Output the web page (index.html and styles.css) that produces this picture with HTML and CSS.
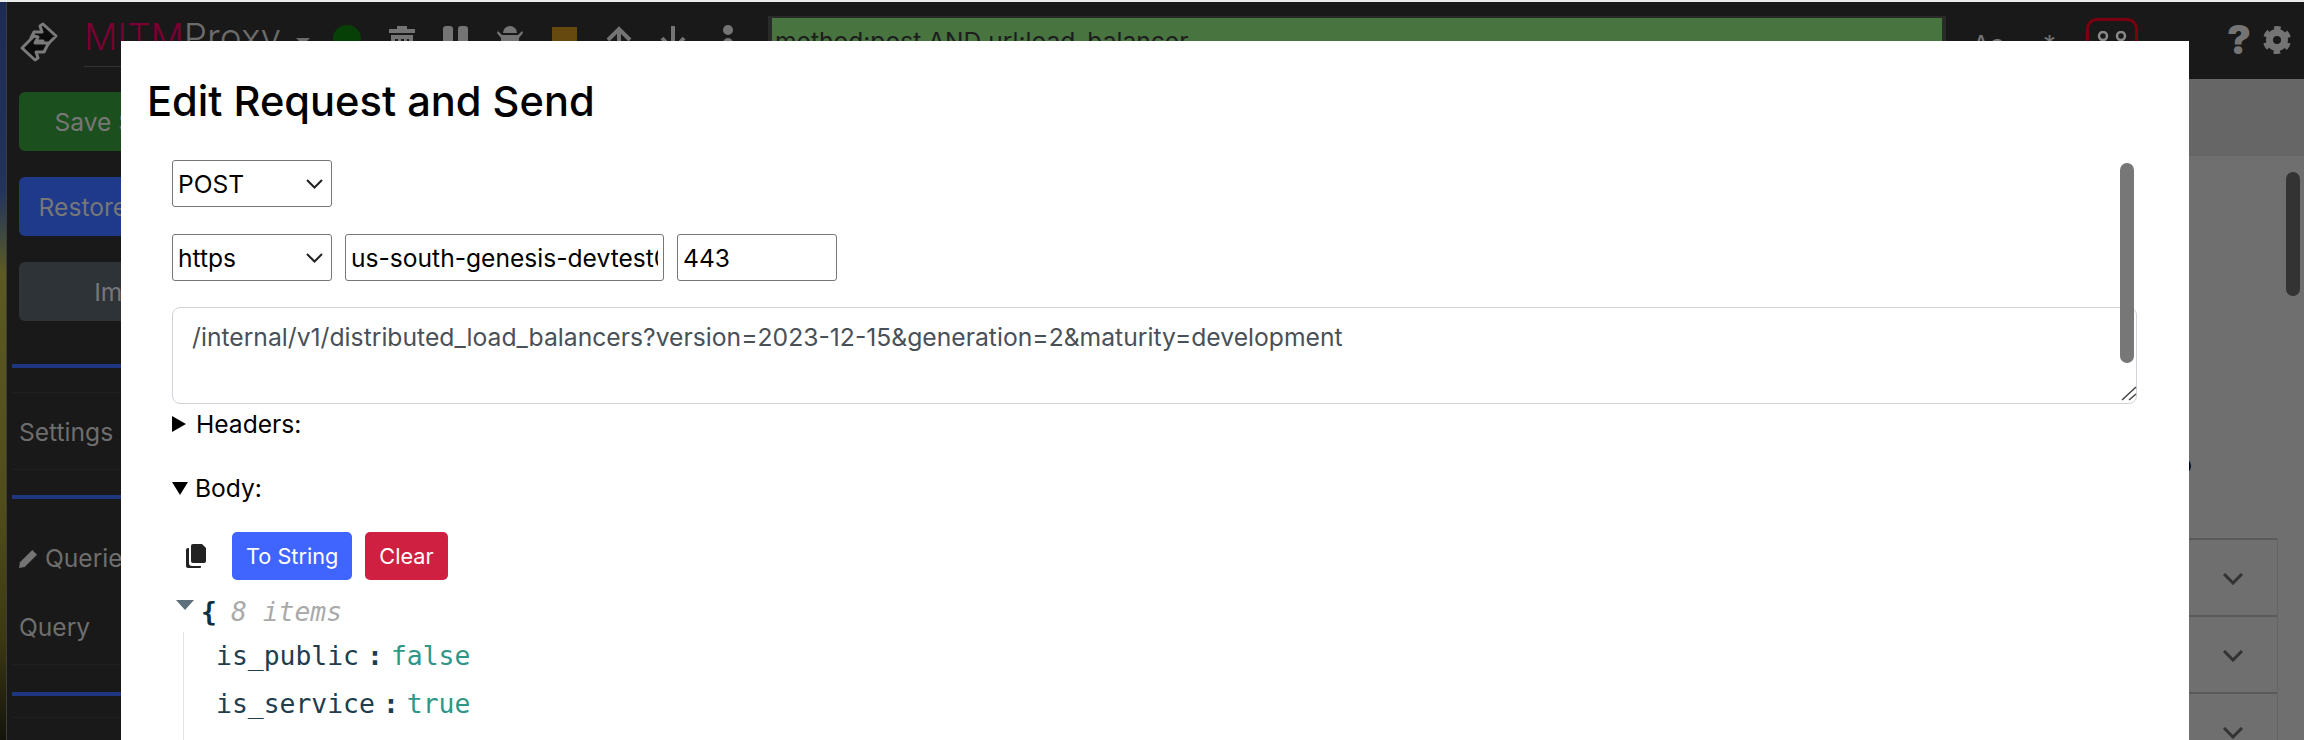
FILE: index.html
```html
<!DOCTYPE html>
<html lang="en">
<head>
<meta charset="utf-8">
<title>Edit Request and Send</title>
<link rel="stylesheet" href="styles.css">
</head>
<body>
<div class="edge"></div>
<div class="shell">
  <div class="wallpaper"></div>
  <div class="app">
    <header class="topbar">
      <svg class="logo" viewBox="0 0 54 48" fill="#0c0c0c" stroke="#7a7a7a" stroke-width="3" stroke-linejoin="round"><path d="M19 20l3-6h8l-2-6 3-2 13 12-12 12-4-1 3-6H20z"/><path d="M35 28l-3 6h-8l2 6-3 2-13-12 12-12 4 1-3 6h14z"/></svg>
      <div class="brand"><span class="brand-mitm">MITM</span><span class="brand-proxy">Proxy</span><span class="brand-caret"></span></div>
      <span class="status-dot"></span>
      <svg class="tool tool-trash" viewBox="0 0 26 40" fill="#747474"><path d="M8 3V0h10v3h8v4H0V3zM2 9h22v31H2zm4 4v20h3V13zm6 0v20h3V13zm6 0v20h2V13z"/></svg>
      <svg class="tool tool-pause" viewBox="0 0 26 40" fill="#747474"><rect width="10" height="40" rx="3"/><rect x="15" width="10" height="40" rx="3"/></svg>
      <svg class="tool tool-bug" viewBox="0 0 26 40" fill="#747474"><path d="M13 0a7 7 0 0 1 7 7H6a7 7 0 0 1 7-7zM5 9h16l4-4 1 2-4 5v3l4 0v3h-4v12H4V18H0v-3h4v-3L0 7l1-2z"/></svg>
      <span class="tool-square"></span>
      <svg class="tool tool-up" viewBox="0 0 26 40" fill="none" stroke="#747474" stroke-width="4"><path d="M2 14 13 3l11 11M13 3v37"/></svg>
      <svg class="tool tool-down" viewBox="0 0 26 40" fill="none" stroke="#747474" stroke-width="4"><path d="M13 0v36M2 12l11 12 11-12"/></svg>
      <svg class="tool tool-dots" viewBox="0 0 26 40" fill="#747474"><circle cx="13" cy="5" r="5"/><circle cx="13" cy="18" r="5"/><circle cx="13" cy="31" r="5"/></svg>
      <div class="filter"><div class="filter-box">method:post AND url:load_balancer</div></div>
      <span class="option option-case">Aa</span>
      <span class="option option-star">*</span>
      <span class="option-tag">
        <svg class="tag-icon" viewBox="0 0 34 22" fill="none" stroke="#8a8a8a" stroke-width="2.5"><circle cx="8" cy="5" r="4"/><circle cx="26" cy="5" r="4"/><path d="M2 19c1-8 11-8 12 0M20 19c1-8 11-8 12 0"/></svg>
      </span>
      <div class="top-right">
        <span class="help">?</span>
        <svg class="gear" viewBox="0 0 28 28" fill="none" stroke="#747474"><circle cx="14" cy="14" r="7.500" stroke-width="7"/><circle class="gear-teeth" cx="14" cy="14" r="12" stroke-width="4"/></svg>
      </div>
    </header>
    <div class="main">
      <aside class="sidebar">
        <button class="side-btn side-green">Save Session</button>
        <button class="side-btn side-blue">Restore Session</button>
        <button class="side-btn side-grey">Import</button>
        <hr class="side-rule side-rule-1">
        <div class="side-row side-row-settings">Settings</div>
        <hr class="side-rule side-rule-2">
        <div class="side-row side-row-queries"><svg class="pencil" viewBox="0 0 20 20" fill="#747474"><path d="M14 1l5 5L6 19l-6 1 1-6z"/></svg>Queries</div>
        <div class="side-row side-row-query">Query</div>
        <hr class="side-rule side-rule-3">
        <div class="side-row-empty"></div>
      </aside>
      <section class="content">
        <div class="content-band"></div>
        <p class="note">Info</p>
        <div class="accordion">
          <div class="acc-item"><svg class="chev" viewBox="0 0 20 12" fill="none" stroke="#333" stroke-width="3"><path d="M1 1l9 9 9-9"/></svg></div>
          <div class="acc-item"><svg class="chev" viewBox="0 0 20 12" fill="none" stroke="#333" stroke-width="3"><path d="M1 1l9 9 9-9"/></svg></div>
          <div class="acc-item"><svg class="chev" viewBox="0 0 20 12" fill="none" stroke="#333" stroke-width="3"><path d="M1 1l9 9 9-9"/></svg></div>
        </div>
      </section>
    </div>
  </div>
</div>
<div class="outer-thumb"></div>

<div class="modal">
  <h2 class="modal-title">Edit Request and Send</h2>
  <form class="modal-body">
    <div class="field-row">
      <select class="select"><option>POST</option></select>
    </div>
    <div class="field-row">
      <select class="select"><option>https</option></select>
      <input class="input input-host" value="us-south-genesis-devtest01.example.com">
      <input class="input input-port" value="443">
    </div>
    <textarea class="path">/internal/v1/distributed_load_balancers?version=2023-12-15&amp;generation=2&amp;maturity=development</textarea>
    <details class="section section-headers"><summary>Headers:</summary></details>
    <details class="section section-body" open>
      <summary>Body:</summary>
      <div class="body-tools">
        <svg class="copy" viewBox="0 0 20 24"><path fill="#222" d="M11 0h5l4 4v13a2 2 0 0 1-2 2H7a2 2 0 0 1-2-2V2a2 2 0 0 1 2-2z"/><path fill="#222" d="M3 4v15a3 3 0 0 0 3 3h9v1a1 1 0 0 1-1 1H2a2 2 0 0 1-2-2V6a2 2 0 0 1 2-2z"/><path fill="#fff" d="M4 5h1v14h-1z"/></svg>
        <button type="button" class="btn btn-blue">To String</button>
        <button type="button" class="btn btn-red">Clear</button>
      </div>
      <div class="json">
        <div class="json-head"><span class="json-caret"></span><span class="json-brace">{</span><span class="json-count">8 items</span></div>
        <div class="json-list">
          <div class="json-row"><span class="json-key">is_public</span><span class="json-colon">:</span><span class="json-val">false</span></div>
          <div class="json-row"><span class="json-key">is_service</span><span class="json-colon">:</span><span class="json-val">true</span></div>
        </div>
      </div>
    </details>
  </form>
  <svg class="resize-grip" viewBox="0 0 16 15" fill="none" stroke="#444" stroke-width="1.500"><path d="M1 14 15 1M8 14l7-6"/></svg>
  <div class="modal-thumb"></div>
</div>
</body>
</html>
```
FILE: styles.css
```css
* { box-sizing: border-box; }
html, body { margin: 0; height: 740px; overflow: hidden; background: #191919; font-family: Inter, "Liberation Sans", sans-serif; }
.edge { height: 2px; background: #ebebeb; }
.shell { display: flex; height: 738px; }
.wallpaper { width: 7px; border-right: 1px solid #3d3d3d; background: linear-gradient(#1c2b52 0, #22345c 190px, #3a4545 225px, #5c5a22 270px, #4f4c1a 520px, #3a3812 640px, #14140c 738px); }
.app { flex: 1; display: flex; flex-direction: column; min-width: 0; }

.topbar { height: 77px; flex: none; background: #191919; display: flex; align-items: flex-start; position: relative; overflow: hidden; }
.logo { width: 54px; height: 48px; margin: 16px 0 0 5px; flex: none; }
.brand { margin: 11px 0 0 18px; height: 54px; width: 232px; border-bottom: 1px solid #333; font-size: 37px; line-height: 48px; font-weight: 300; display: flex; flex: none; }
.brand-mitm { color: #7a0033; }
.brand-proxy { color: #6b6b6b; }
.brand-caret { width: 0; height: 0; border: 7px solid transparent; border-top-color: #6b6b6b; margin: 25px 0 0 15px; }
.status-dot { position: absolute; left: 326px; top: 23px; width: 28px; height: 28px; border-radius: 50%; background: #064006; }
.tool { position: absolute; top: 24px; width: 26px; height: 40px; }
.tool-trash { left: 382px; }
.tool-pause { left: 436px; }
.tool-bug { left: 490px; }
.tool-up { left: 599px; }
.tool-down { left: 653px; }
.tool-dots { left: 708px; top: 23px; }
.tool-square { position: absolute; left: 545px; top: 25px; width: 25px; height: 25px; background: #66490f; }
.filter { position: absolute; left: 761px; top: 14px; width: 1178px; height: 40px; background: #2a2a2a; padding: 2px 4px; }
.filter-box { height: 40px; background: #47743f; padding: 8px 3px; font-size: 24.600px; line-height: 30px; color: #1d1d1d; white-space: nowrap; }
.option { position: absolute; color: #747474; font-size: 26px; line-height: 30px; top: 28px; }
.option-case { left: 1965px; }
.option-star { left: 2036px; }
.option-tag { position: absolute; left: 2079px; top: 16px; width: 52px; height: 40px; border: 3px solid #7a0010; border-radius: 11px; display: flex; justify-content: center; }
.tag-icon { width: 34px; height: 22px; margin-top: 10px; }
.top-right { position: absolute; left: 2219px; top: 23px; display: flex; align-items: center; gap: 11px; }
.help { color: #747474; font-size: 40px; line-height: 30px; font-weight: 900; width: 26px; text-align: center; }
.gear { width: 28px; height: 28px; }
.gear-teeth { stroke-dasharray: 6.500 6.070; stroke-dashoffset: -3.030; }

.main { flex: 1; display: flex; min-height: 0; }
.sidebar { width: 250px; flex: none; background: #191919; padding: 13px 0 0 12px; }
.side-btn { display: block; width: 226px; height: 59px; border: 0; border-radius: 6px; margin-bottom: 26px; font: 24.600px Inter, sans-serif; color: #777; text-align: center; white-space: nowrap; padding: 0; }
.side-green { background: #1c4f1e; }
.side-blue { background: #1f3a8a; }
.side-grey { background: #2e3338; }
.side-rule { border: 0; height: 4px; margin: 0 0 0 -7px; background: #1f3680; }
.side-rule-1 { margin-top: 43px; }
.side-rule-2 { margin-top: 25px; }
.side-rule-3 { margin-top: 27px; }
.side-row { color: #6e6e6e; font-size: 24.600px; line-height: 30px; white-space: nowrap; }
.side-row-settings { margin: 24px 0 0 -7px; padding-left: 7px; height: 78px; line-height: 78px; border-top: 1px solid #202020; border-bottom: 1px solid #202020; }
.side-row-queries { margin-top: 44px; display: flex; align-items: center; gap: 7px; }
.side-row-query { margin: 16px 0 0 -7px; padding-left: 7px; height: 76px; line-height: 76px; border-bottom: 1px solid #202020; }
.side-row-empty { height: 22px; margin-left: -7px; border-bottom: 1px solid #202020; }
.pencil { width: 19px; height: 19px; flex: none; }

.content { flex: 1; background: #6f6f6f; display: flex; flex-direction: column; align-items: flex-end; padding-right: 26px; }
.content-band { align-self: stretch; height: 77px; margin-right: -26px; background: #666; flex: none; }
.note { align-self: stretch; margin: 293px 86px 0 0; font-size: 24.600px; line-height: 30px; color: #000; text-align: right; }
.accordion { margin-top: 59px; width: 200px; border-right: 1px solid #656565; }
.acc-item { height: 77px; border-top: 2px solid #5a5a5a; display: flex; justify-content: flex-end; padding: 33px 34px 0 0; }
.chev { width: 20px; height: 12px; }
.outer-thumb { position: absolute; left: 2286px; top: 172px; width: 14px; height: 124px; border-radius: 7px; background: #333; }

.modal { position: absolute; left: 121px; top: 41px; width: 2068px; height: 699px; background: #fff; padding: 33px 26px 0; overflow: hidden; color: #000; }
.modal-title { margin: 0; font-size: 41.600px; line-height: 54px; font-weight: 500; }
.modal-body { margin-top: 32px; padding-left: 25px; width: 1990px; display: flex; flex-direction: column; align-items: flex-start; }
.field-row { display: flex; gap: 13px; margin-bottom: 27px; }
.select, .input { height: 47px; border: 1px solid #767676; border-radius: 3px; background-color: #fff; font: 24.600px Inter, sans-serif; color: #000; padding: 0 5px; }
.select { width: 160px; appearance: none; background-image: url("data:image/svg+xml,%3Csvg xmlns='http://www.w3.org/2000/svg' width='17' height='10' fill='none' stroke='%23222' stroke-width='2'%3E%3Cpath d='M1 1l7.500 7.500L16 1'/%3E%3C/svg%3E"); background-repeat: no-repeat; background-position: right 8px center; }
.input-host { width: 319px; }
.input-port { width: 160px; }
.path { display: block; width: 1965px; height: 97px; margin-top: -1px; border: 1px solid #ced4da; border-radius: 8px; padding: 11px 19px; font: 24.700px/36px Inter, sans-serif; color: #495057; outline: 0; resize: none; }
.section { font-size: 24.600px; line-height: 30px; }
.section summary { list-style: none; display: flex; align-items: center; }
.section summary::before { content: ""; width: 0; height: 0; border-style: solid; margin-right: 10px; }
.section-headers summary::before { border-width: 8px 0 8px 14px; border-color: transparent transparent transparent #000; }
.section-body summary::before { border-width: 13px 8.500px 0; border-color: #000 transparent transparent; margin-right: 7px; }
.section-headers { margin-top: 5px; }
.section-body { margin-top: 34px; }
.body-tools { display: flex; align-items: center; margin-top: 29px; padding-left: 14px; }
.copy { width: 20px; height: 24px; margin-right: 26px; flex: none; }
.btn { height: 48px; border: 0; border-radius: 5px; font: 21.700px Inter, sans-serif; color: #fff; padding: 0 14px; margin-right: 13px; }
.btn-blue { background: #4065ff; }
.btn-red { background: #cf2042; }
.json { font-family: "DejaVu Sans Mono", monospace; font-size: 26.400px; line-height: 48px; margin-top: 8px; color: #1f3d4d; }
.json-head { display: flex; align-items: center; height: 48px; }
.json-caret { width: 0; height: 0; border: 9px solid transparent; border-top: 10px solid #5c6f7a; border-bottom: 0; margin: -14px 7px 0 4px; }
.json-brace { font-weight: 700; color: #0f3040; }
.json-count { font-style: italic; color: #aaa; margin-left: 14px; }
.json-list { margin-left: 11px; border-left: 1px solid #e3e3e3; padding-left: 32px; margin-top: -4px; min-height: 200px; }
.json-row { display: flex; height: 48px; }
.json-colon { font-weight: 700; margin: 0 8px; }
.json-val { color: #2f9688; }
.resize-grip { position: absolute; left: 2000px; top: 345px; width: 16px; height: 15px; }
.modal-thumb { position: absolute; left: 1999px; top: 122px; width: 14px; height: 200px; border-radius: 7px; background: #777; }
```
